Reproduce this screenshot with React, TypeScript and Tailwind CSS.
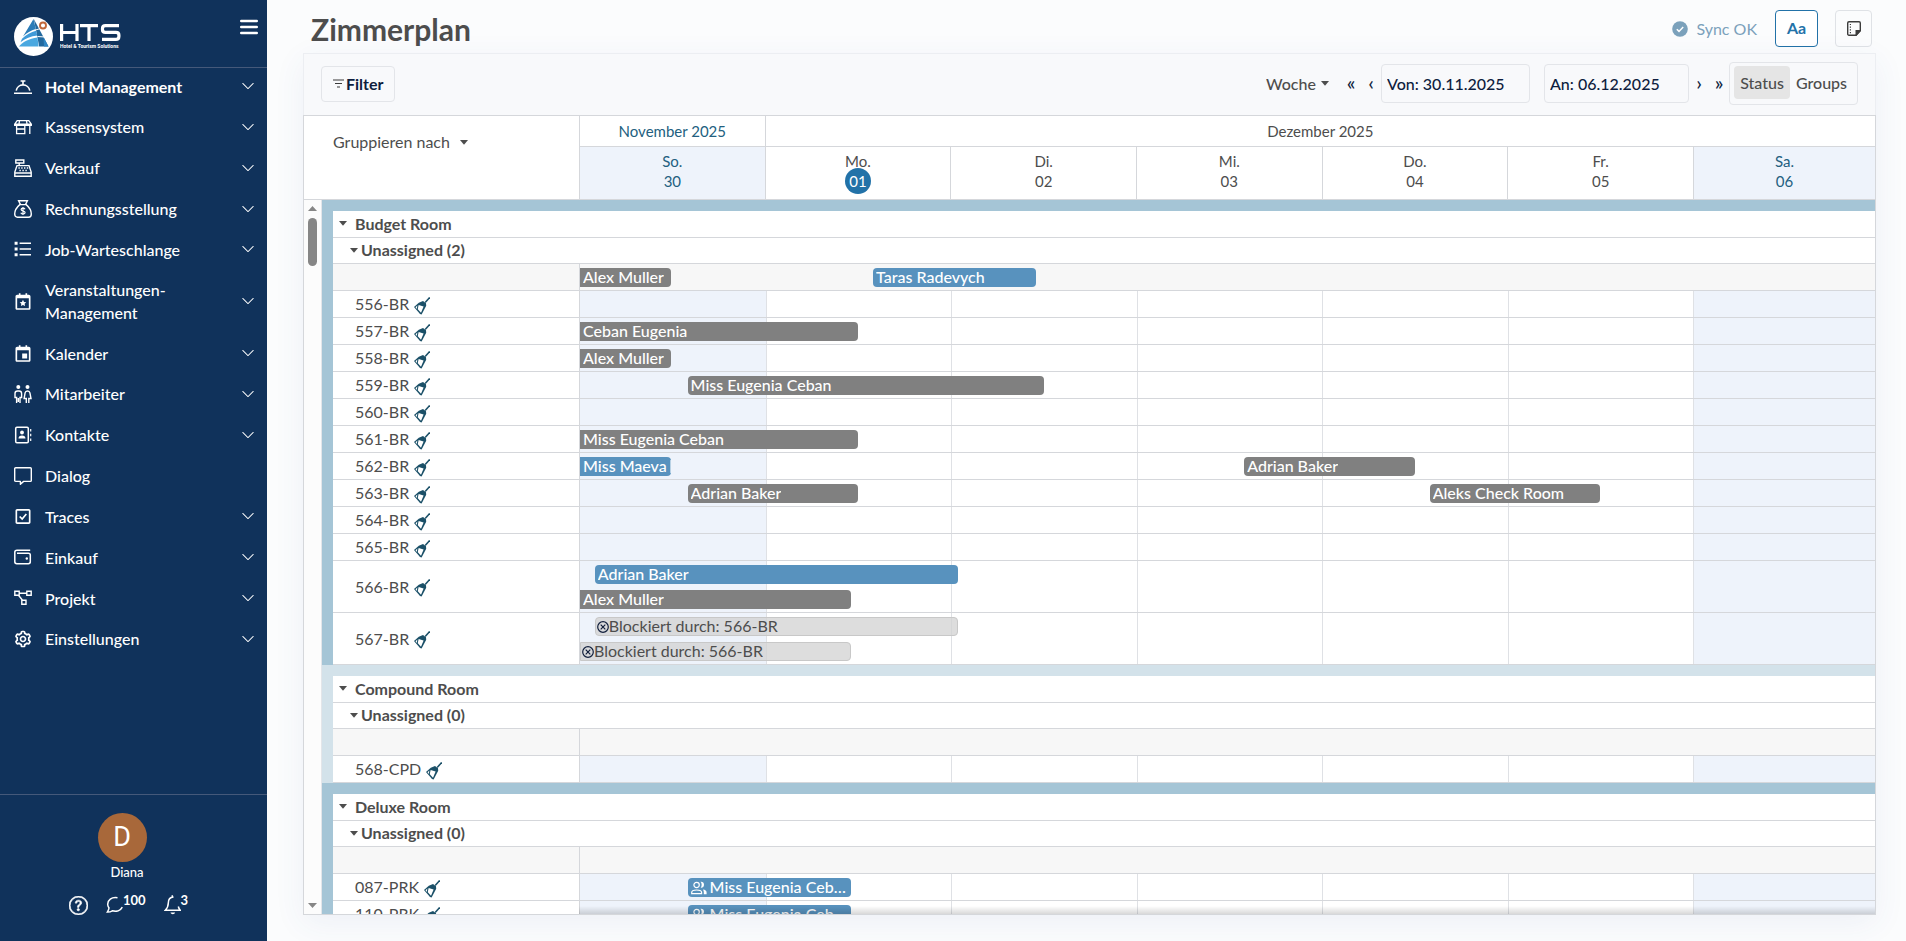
import type { ReactNode } from "react";
import { BiCalendarEvent, BiCalendarStar, BiCheckSquare, BiCog } from "react-icons/bi";
import { BsChevronDown, BsQuestionCircle } from "react-icons/bs";

interface NavItem {
  label: string;
  icon: ReactNode;
  active?: boolean;
  leaf?: boolean;
}

interface Booking {
  name: string;
  // offsets in days, counted from the first visible day
  from: number;
  to: number;
  kind: "gray" | "blue" | "blocked";
  group?: boolean;
  partial?: boolean;
}

interface Room {
  name: string;
  lanes: Booking[][];
}

interface RoomGroup {
  name: string;
  frame: string;
  unassigned: Booking[];
  rooms: Room[];
}

const NAV_ITEMS: NavItem[] = [
  { label: "Hotel Management", icon: <BellIcon />, active: true },
  { label: "Kassensystem", icon: <ShopIcon /> },
  { label: "Verkauf", icon: <RegisterIcon /> },
  { label: "Rechnungsstellung", icon: <MoneyBagIcon /> },
  { label: "Job-Warteschlange", icon: <ListIcon /> },
  { label: "Veranstaltungen-Management", icon: <BiCalendarStar size={21} /> },
  { label: "Kalender", icon: <BiCalendarEvent size={21} /> },
  { label: "Mitarbeiter", icon: <StaffIcon /> },
  { label: "Kontakte", icon: <ContactsIcon /> },
  { label: "Dialog", icon: <DialogIcon />, leaf: true },
  { label: "Traces", icon: <BiCheckSquare size={21} /> },
  { label: "Einkauf", icon: <WalletIcon /> },
  { label: "Projekt", icon: <ProjectIcon /> },
  { label: "Einstellungen", icon: <BiCog size={22} /> },
];

const DAYS = [
  { day: "So.", date: "30", weekend: true },
  { day: "Mo.", date: "01", today: true },
  { day: "Di.", date: "02" },
  { day: "Mi.", date: "03" },
  { day: "Do.", date: "04" },
  { day: "Fr.", date: "05" },
  { day: "Sa.", date: "06", weekend: true },
];

const GROUPS: RoomGroup[] = [
  {
    name: "Budget Room",
    frame: "bg-[#a5c5d6]",
    unassigned: [
      { name: "Alex Muller", from: 0, to: 0.49, kind: "gray" },
      { name: "Taras Radevych", from: 1.58, to: 2.46, kind: "blue" },
    ],
    rooms: [
      { name: "556-BR", lanes: [[]] },
      { name: "557-BR", lanes: [[{ name: "Ceban Eugenia", from: 0, to: 1.5, kind: "gray" }]] },
      { name: "558-BR", lanes: [[{ name: "Alex Muller", from: 0, to: 0.49, kind: "gray" }]] },
      { name: "559-BR", lanes: [[{ name: "Miss Eugenia Ceban", from: 0.58, to: 2.5, kind: "gray" }]] },
      { name: "560-BR", lanes: [[]] },
      { name: "561-BR", lanes: [[{ name: "Miss Eugenia Ceban", from: 0, to: 1.5, kind: "gray" }]] },
      {
        name: "562-BR",
        lanes: [
          [
            { name: "Miss Maeva", from: 0, to: 0.49, kind: "blue", partial: true },
            { name: "Adrian Baker", from: 3.58, to: 4.5, kind: "gray" },
          ],
        ],
      },
      {
        name: "563-BR",
        lanes: [
          [
            { name: "Adrian Baker", from: 0.58, to: 1.5, kind: "gray" },
            { name: "Aleks Check Room", from: 4.58, to: 5.5, kind: "gray" },
          ],
        ],
      },
      { name: "564-BR", lanes: [[]] },
      { name: "565-BR", lanes: [[]] },
      {
        name: "566-BR",
        lanes: [
          [{ name: "Adrian Baker", from: 0.08, to: 2.04, kind: "blue" }],
          [{ name: "Alex Muller", from: 0, to: 1.46, kind: "gray" }],
        ],
      },
      {
        name: "567-BR",
        lanes: [
          [{ name: "Blockiert durch: 566-BR", from: 0.08, to: 2.04, kind: "blocked" }],
          [{ name: "Blockiert durch: 566-BR", from: 0, to: 1.46, kind: "blocked" }],
        ],
      },
    ],
  },
  {
    name: "Compound Room",
    frame: "bg-[#d3e2ea]",
    unassigned: [],
    rooms: [{ name: "568-CPD", lanes: [[]] }],
  },
  {
    name: "Deluxe Room",
    frame: "bg-[#a5c5d6]",
    unassigned: [],
    rooms: [
      { name: "087-PRK", lanes: [[{ name: "Miss Eugenia Ceban", from: 0.58, to: 1.46, kind: "blue", group: true }]] },
      { name: "110-PRK", lanes: [[{ name: "Miss Eugenia Ceban", from: 0.58, to: 1.46, kind: "blue", group: true }]] },
    ],
  },
];

const BAR_STYLES: Record<Booking["kind"], string> = {
  gray: "bg-[#808080] pl-[3px] text-white font-medium",
  blue: "bg-[#5892be] pl-[3px] text-white font-medium",
  blocked: "border border-[#c8c8c8] bg-[#d2d2d2]/75 pl-px text-[#4d4d4d]",
};

// the last day column is cut slightly by the panel edge
const DAY_WIDTH = (51 / 356) * 100;

function BellIcon() {
  return (
    <svg width="18" height="18" viewBox="0 0 18 18" fill="none" stroke="currentColor" strokeWidth="1.6">
      <path d="M0 16.2h18M2.2 13.6a6.9 6.9 0 0 1 13.6 0M9 7.5V4.5M6.6 4h4.8" />
    </svg>
  );
}

function ShopIcon() {
  return (
    <svg width="18" height="18" viewBox="0 0 18 18" fill="none" stroke="currentColor" strokeWidth="1.3">
      <path d="M3.2 2.6h11.6l2.5 3.6H.7zM.7 6.2v1.2h16.6V6.2M2.6 7.4v8.2h8.2V7.4M2.6 11h8.2M15.8 7.4V16M5.5 2.8 4.8 7M12.5 2.8l.7 4.2" />
    </svg>
  );
}

function RegisterIcon() {
  return (
    <svg width="18" height="18" viewBox="0 0 18 18" fill="none" stroke="currentColor" strokeWidth="1.4">
      <path d="M1.8 1h8v3h-8zM5.2 4v2.5M3 6.6h12l2.2 6.4v4.2H.8V13zM.8 14h16.4" />
      <path d="M4.4 9h1.4M7.2 9h1.4M10 9h1.4M12.8 9h1.4M5.4 11.5h1.4M8.4 11.5h1.4M11.4 11.5h1.4" />
    </svg>
  );
}

function MoneyBagIcon() {
  return (
    <svg width="18" height="18" viewBox="0 0 18 18" fill="none" stroke="currentColor" strokeWidth="1.4">
      <path d="M6.4 4.4 4.6.8h8.8l-1.8 3.6M5.8 4.6h6.4C15 7 17.3 10.4 17.3 14c0 2-1 3.2-2.8 3.2h-11C1.7 17.2.7 16 .7 14 .7 10.4 3 7 5.8 4.6z" />
      <path d="M11 9.2c-.4-.8-1.2-1-2-1-1.1 0-1.9.6-1.9 1.4 0 2 4 .8 4 2.9 0 .9-.9 1.5-2.1 1.5-1 0-1.8-.4-2.2-1.2M9 7v8" strokeWidth="1.2" />
    </svg>
  );
}

function ListIcon() {
  return (
    <svg width="18" height="18" viewBox="0 0 18 18" fill="currentColor">
      <path d="M.6 1.800h3v3h-3zM.6 7.500h3v3h-3zM.6 13.200h3v3h-3zM5.600 2.600h11.400v1.400H5.600zM5.600 8.300h11.400v1.400H5.600zM5.600 14h11.400v1.400H5.600z" />
    </svg>
  );
}

function StaffIcon() {
  return (
    <svg width="18" height="18" viewBox="0 0 18 18" fill="none" stroke="currentColor" strokeWidth="1.4">
      <circle cx="4.3" cy="2" r="2" fill="currentColor" stroke="none" />
      <circle cx="13.5" cy="2" r="2" fill="currentColor" stroke="none" />
      <path d="M2.6 18v-5.5H1V8.6C1 7 2 6 3.5 6h1.6C6.6 6 7.6 7 7.6 8.6v3.9H6V18M4.3 13v4" />
      <path d="M12.3 18v-4.5h-2.2l1-5.5c.2-1.3 1-2 2.4-2s2.2.7 2.4 2l1.1 5.5h-2.2V18" />
    </svg>
  );
}

function ContactsIcon() {
  return (
    <svg width="18" height="18" viewBox="0 0 18 18" fill="none" stroke="currentColor" strokeWidth="1.5">
      <rect x="1.7" y="1.2" width="12.6" height="15.6" rx="1.2" />
      <path d="M16.7 3v2.5M16.7 7.8v2.5M16.7 12.5V15" strokeWidth="1.2" />
      <circle cx="8" cy="6.5" r="1.9" fill="currentColor" stroke="none" />
      <path d="M4.5 12.6c0-2 1.3-3.2 3.5-3.2s3.5 1.2 3.5 3.2z" fill="currentColor" stroke="none" />
    </svg>
  );
}

function DialogIcon() {
  return (
    <svg width="18" height="18" viewBox="0 0 18 18" fill="none" stroke="currentColor" strokeWidth="1.4" strokeLinejoin="round">
      <path d="M1.7.8h14.6c.6 0 1 .4 1 1v11.6c0 .6-.4 1-1 1H9.6l-3.2 2.8v-2.8H1.7c-.6 0-1-.4-1-1V1.8c0-.6.4-1 1-1z" />
    </svg>
  );
}

function WalletIcon() {
  return (
    <svg width="18" height="18" viewBox="0 0 18 18" fill="none" stroke="currentColor" strokeWidth="1.5">
      <path d="M16.2 2.3H3C1.7 2.3.8 3 .8 4.2v9.600c0 1.200.8 1.900 2 1.900h11.600c1.200 0 1.900-.7 1.900-1.900V7c0-1.200-.7-1.800-1.900-1.800H3" />
      <circle cx="12.8" cy="10.5" r="1.2" fill="currentColor" stroke="none" />
    </svg>
  );
}

function ProjectIcon() {
  return (
    <svg width="18" height="18" viewBox="0 0 18 18" fill="none" stroke="currentColor" strokeWidth="1.4">
      <path d="M.8 2.300h4.400v4H.8zM12.800 2.300h4.400v4h-4.400zM7.800 11.300h4.200v4H7.800zM5.200 4.300h7.600M4.500 6.300l4 5" />
    </svg>
  );
}

function Caret({ className = "" }: { className?: string }) {
  return (
    <svg width="8" height="5" viewBox="0 0 8 5" fill="currentColor" className={`shrink-0 ${className}`}>
      <path d="M0 0h8L4 4.800z" />
    </svg>
  );
}

function BroomIcon() {
  return (
    <svg width="16" height="18" viewBox="0 0 16 18" className="mt-[3px] shrink-0 text-[#1b5068]">
      <path d="M15.700.4 11.200 5.400" stroke="currentColor" strokeWidth="1.500" fill="none" />
      <path d="M0 10 4.800 5.800 9 4l3 2.200.2 2.600L7.600 17.600 6 17z" fill="currentColor" />
      <path d="M4.600 7.900 9.600 9.600 7 15.800 3.800 12.200z" fill="#fff" />
      <path d="M1.500 10.200 3.300 8.600 2.900 12z" fill="#fff" />
    </svg>
  );
}

function BlockedIcon() {
  return (
    <svg width="12" height="12" viewBox="0 0 12 12" fill="none" stroke="#12203d" strokeWidth="1.200" className="shrink-0">
      <circle cx="6" cy="6" r="5.300" />
      <path d="m3.700 3.700 4.600 4.600M8.300 3.700 3.700 8.300" />
    </svg>
  );
}

function GuestsIcon() {
  return (
    <svg width="16" height="14" viewBox="0 0 16 14" fill="none" stroke="currentColor" strokeWidth="1.200" className="shrink-0">
      <circle cx="5.600" cy="4" r="2.700" />
      <path d="M.7 12.700v-1.200C.7 9.800 2.600 9 5.600 9s5 .8 5 2.500v1.200z" />
      <path d="M9.500.8c2.200-.3 3.500 1 3.500 3 0 1.800-1.300 3.200-3.300 3 1.400-1.700 1.300-4.400-.2-6zM12 8.600c2.200.3 3.600 1.200 3.600 2.900v1.800h-2.800c.2-2-.1-3.500-.8-4.700z" fill="currentColor" stroke="none" />
    </svg>
  );
}

function Logo() {
  return (
    <a href="#" aria-label="HTS" className="flex items-center gap-[7px]">
      <svg width="39" height="39" viewBox="0 0 39 39">
        <circle cx="19.500" cy="19.500" r="19.500" fill="#fff" />
        <path d="M19.800 2 34.500 29.500H25.200z" fill="#22699f" />
        <path d="M29.500 20l5 9.500H30z" fill="#2f86c4" />
        <path d="M19.500 2 21.800 12C17 13.300 12.500 16 9 19.500z" fill="#2b7cb8" />
        <path d="M22 13.700 23.300 18.600C17 19.300 11 21.500 6.500 25.300L8 21.800C12 17.500 17 15 22 13.700z" fill="#3f9ad8" />
        <path d="M23.500 20.400 24.600 29.500H5C8 25 15 21.400 23.500 20.400z" fill="#4aa8e0" />
        <path d="M22 12.900 26.500 11.500M23.500 19.500 31 20" stroke="#fff" strokeWidth="1" />
        <circle cx="29" cy="8.500" r="3" fill="#fff" stroke="#c0673a" strokeWidth="1.900" />
      </svg>
      <svg width="66" height="26" viewBox="0 0 66 26" fill="none" stroke="#fff" strokeWidth="3.200">
        <path d="M1.600 0v17M17 0v17M1.600 8.500H17M20 1.600h18M29 1.600V17M59 1.600H45.500c-2 0-3 .9-3 2.700v1.400c0 1.800 1 2.700 3 2.700h10.400c2 0 3 .9 3 2.700v1.400c0 1.900-1 2.900-3 2.900H42" />
        <text x="0" y="24" fontSize="5" fontWeight="700" fontFamily="Roboto, sans-serif" fill="#fff" stroke="none">
          Hotel &amp; Tourism Solutions
        </text>
      </svg>
    </a>
  );
}

function Sidebar() {
  return (
    <aside className="flex w-[267px] shrink-0 flex-col bg-[#10325b] text-white">
      <div className="flex h-[68px] items-start justify-between border-b border-[#45597a] pt-[17px] pr-2 pl-[14px]">
        <Logo />
        <button type="button" aria-label="Menü" className="px-px pt-[2px]">
          <svg width="18" height="16" viewBox="0 0 18 16" fill="none" stroke="#fff" strokeWidth="2.400" strokeLinecap="round">
            <path d="M1.200 2h15.600M1.200 8h15.600M1.200 14h15.600" />
          </svg>
        </button>
      </div>

      <nav className="flex flex-1 flex-col justify-between pb-[135px]">
        {NAV_ITEMS.map((item) => (
          <a
            key={item.label}
            href="#"
            className="flex min-h-[38px] items-center justify-between pt-[6px] pb-2 pr-3 pl-[13px] text-base leading-[23px]"
          >
            <span className="flex items-center">
              <span className="flex w-5 shrink-0 justify-center">{item.icon}</span>
              <span className={`ml-3 w-[160px] ${item.active ? "font-bold" : "font-medium"}`}>
                {item.label}
              </span>
            </span>
            {!item.leaf && <BsChevronDown size={14} />}
          </a>
        ))}
      </nav>

      <div className="flex h-[147px] flex-col items-center border-t border-[#45597a] pt-[18px]">
        <div className="mr-[23px] flex size-[49px] items-center justify-center rounded-full bg-[#a8683a] font-[Roboto] text-[27px]">
          D
        </div>
        <p className="mr-[13px] text-[13px] leading-5 font-medium">Diana</p>
        <div className="mt-[11px] mr-[10px] flex items-start gap-[18px]">
          <button type="button" aria-label="Hilfe" className="pt-[3px]">
            <BsQuestionCircle size={19} strokeWidth={0.5} />
          </button>
          <button type="button" aria-label="Nachrichten" className="flex items-start">
            <svg width="17" height="23" viewBox="0 0 17 23" fill="none" stroke="currentColor" strokeWidth="1.500">
              <path d="M11.500 4.800C5.500 3.800 1.500 7.300 1.700 11.500c0 1.500.7 2.600 1.300 3.500-.2 1.500-.8 2.800-1.700 4.100 1.800.1 3.500-.3 5-1.300 4 1 8.300-.1 10-3.600" />
            </svg>
            <span className="text-[13px] leading-[14px] font-bold">100</span>
          </button>
          <button type="button" aria-label="Benachrichtigungen" className="flex items-start">
            <svg width="17" height="23" viewBox="0 0 17 23" fill="none" stroke="currentColor" strokeWidth="1.500">
              <path d="M9.500 4C6 4.200 4.300 7 4.300 10c0 3-.8 5-3 7.300h15c-1-1-1.700-2.300-2-3.800M8.300 2.300v2" />
              <path d="M6.500 19.500h4.600c-.3 1.200-1.200 1.700-2.300 1.700s-2-.5-2.300-1.700z" fill="currentColor" stroke="none" />
            </svg>
            <span className="text-[13px] leading-[14px] font-bold">3</span>
          </button>
        </div>
      </div>
    </aside>
  );
}

function PageHeader() {
  return (
    <header className="flex h-[53px] shrink-0 items-start justify-between pr-1 pl-2">
      <h1 className="text-[30px] leading-[58px] font-bold text-[#4d4d4d]">Zimmerplan</h1>
      <div className="flex items-center pt-[10px]">
        <svg width="16" height="16" viewBox="0 0 16 16" className="mr-2">
          <circle cx="8" cy="8" r="7.800" fill="#7ba1bb" />
          <path d="m4.800 8.200 2.200 2.200 4.200-4.400" fill="none" stroke="#fff" strokeWidth="1.500" />
        </svg>
        <span className="text-base text-[#7ba1bb]">Sync OK</span>
        <button
          type="button"
          className="ml-[18px] h-[37px] w-[43px] rounded border border-[#2272a8] bg-white pb-[2px] text-base font-bold text-[#2272a8]"
        >
          Aa
        </button>
        <button
          type="button"
          aria-label="Notizen"
          className="ml-[17px] flex h-[37px] w-[37px] items-center justify-center rounded border border-[#dfe2e6]"
        >
          <svg width="14" height="15" viewBox="0 0 14 15" fill="none" stroke="#3c3c3c" strokeWidth="1.400">
            <path d="M2 .8h10c.8 0 1.300.5 1.300 1.300v7.500L9 14.200H2c-.8 0-1.300-.5-1.300-1.300V2.100C.7 1.300 1.200.8 2 .8z" />
            <path d="M13 9.800H9.200V14z" fill="#3c3c3c" />
            <path d="M2.800 3.500h1.200M2.800 6.200h1.200M2.800 8.900h1.200M2.800 11.600h1.200" strokeWidth="1.200" />
          </svg>
        </button>
      </div>
    </header>
  );
}

function Toolbar() {
  return (
    <div className="flex h-[62px] items-center justify-between border-x border-t border-[#eceef2] bg-[#f8f9fb] pr-[17px] pb-[2px] pl-[17px]">
      <button
        type="button"
        className="flex h-9 items-center gap-[2px] rounded border border-[#e3e5e9] px-[11px] text-base font-bold text-[#0e1d3e]"
      >
        <svg width="11" height="9" viewBox="0 0 11 9" fill="none" stroke="#3a3a3a" strokeWidth="1.100">
          <path d="M0 1h11M2 4.500h7M4 8h3" />
        </svg>
        Filter
      </button>

      <div className="flex items-center text-base font-medium text-[#0e1d3e]">
        <label className="relative flex items-center text-[#4d4d4d]">
          <span className="sr-only">Zeitraum</span>
          <select defaultValue="Woche" className="h-8 w-[63px] appearance-none bg-transparent">
            <option>Woche</option>
          </select>
          <Caret className="pointer-events-none absolute right-0" />
        </label>
        <button type="button" aria-label="Vorherige Woche" className="ml-4 w-3 pb-[3px] text-xl">
          «
        </button>
        <button type="button" aria-label="Vorheriger Tag" className="ml-2 w-3 pb-[3px] text-xl">
          ‹
        </button>
        <input
          aria-label="Von"
          defaultValue="Von: 30.11.2025"
          className="ml-1 h-[39px] w-[149px] rounded border border-[#e3e5e9] px-[5px]"
        />
        <input
          aria-label="An"
          defaultValue="An: 06.12.2025"
          className="ml-[14px] h-[39px] w-[145px] rounded border border-[#e3e5e9] px-[5px]"
        />
        <button type="button" aria-label="Nächster Tag" className="ml-1 w-3 pb-[3px] text-xl">
          ›
        </button>
        <button type="button" aria-label="Nächste Woche" className="ml-2 w-3 pb-[3px] text-xl">
          »
        </button>
        <div className="ml-1 flex h-[43px] rounded border border-[#e3e5e9] px-1 pt-[3px] pb-[5px] text-[#4d4d4d]">
          <button type="button" className="w-14 rounded-sm bg-[#e5e5e5]">
            Status
          </button>
          <button type="button" className="w-[63px]">
            Groups
          </button>
        </div>
      </div>
    </div>
  );
}

function PlanHeader() {
  return (
    <div className="flex h-[84px] shrink-0 border-b border-[#d5d7db] bg-white text-[15px] text-[#4d4d4d]">
      <div className="w-[275px] shrink-0 pt-[14px] pl-[29px]">
        <button type="button" className="flex items-center gap-[10px] text-base leading-6">
          Gruppieren nach
          <Caret />
        </button>
      </div>
      <div className="grid flex-1 grid-cols-[repeat(6,51fr)_50fr] grid-rows-[31px_52px] text-center">
        <div className="border-b border-l border-[#d5d7db] leading-[30px] text-[#235f80]">
          November 2025
        </div>
        <div className="col-span-6 border-b border-l border-[#d5d7db] leading-[30px]">Dezember 2025</div>
        {DAYS.map((d) => (
          <div
            key={d.date}
            className={`border-l border-[#d5d7db] pt-1 leading-5 ${d.weekend ? "bg-[#eef3fb] text-[#235f80]" : ""}`}
          >
            {d.day}
            <div className="flex justify-center">
              {d.today ? (
                <span className="-mt-[3px] flex size-[26px] items-center justify-center rounded-full bg-[#2272a8] text-white">
                  {d.date}
                </span>
              ) : (
                d.date
              )}
            </div>
          </div>
        ))}
      </div>
    </div>
  );
}

function Bar({ booking }: { booking: Booking }) {
  return (
    <div
      className={`absolute inset-y-0 flex items-center overflow-hidden leading-[18px] ${
        booking.from === 0 ? "rounded-r" : "rounded"
      } ${BAR_STYLES[booking.kind]}`}
      style={{
        left: `${booking.from * DAY_WIDTH}%`,
        width: `${(booking.to - booking.from) * DAY_WIDTH}%`,
      }}
    >
      {booking.kind === "blocked" && <BlockedIcon />}
      {booking.group && <GuestsIcon />}
      <span className={booking.group ? "mr-1 ml-[3px] truncate pb-px" : "truncate pb-px"}>{booking.name}</span>
      {booking.partial && <span className="absolute inset-y-[3px] right-0 w-px bg-[#b9d2e5]" />}
    </div>
  );
}

function Lanes({ lanes }: { lanes: Booking[][] }) {
  return (
    <div className="relative flex flex-col gap-[6px] pt-1 pb-[3px]">
      {lanes.map((lane, i) => (
        <div key={i} className="relative h-[19px]">
          {lane.map((b) => (
            <Bar key={b.name} booking={b} />
          ))}
        </div>
      ))}
    </div>
  );
}

function DayCells() {
  return (
    <div className="absolute inset-0 grid grid-cols-[repeat(6,51fr)_50fr]">
      {DAYS.map((d, i) => (
        <div
          key={d.date}
          className={`${i > 0 ? "border-l border-[#dfe1e5]" : ""} ${d.weekend ? "bg-[#eef3fb]" : ""}`}
        />
      ))}
    </div>
  );
}

function Group({ group }: { group: RoomGroup }) {
  return (
    <section className={`pt-[11px] pl-[11px] ${group.frame}`}>
      <div className="bg-white">
        <button
          type="button"
          className="flex h-[27px] w-full items-center gap-2 border-b border-[#d5d7db] pb-px pl-[6px] font-bold"
        >
          <Caret />
          {group.name}
        </button>
        <button
          type="button"
          className="flex h-[26px] w-full items-center gap-[3px] border-b border-[#d5d7db] pb-px pl-[17px] font-bold"
        >
          <Caret />
          Unassigned ({group.unassigned.length})
        </button>
        <div className="flex border-b border-[#d5d7db] bg-[#f7f7f7]">
          <div className="w-[247px] shrink-0 border-r border-[#d5d7db]" />
          <div className="flex-1">
            <Lanes lanes={[group.unassigned]} />
          </div>
        </div>
        {group.rooms.map((room) => (
          <div key={room.name} className="flex border-b border-[#d5d7db]">
            <div className="flex w-[247px] shrink-0 items-center gap-[5px] border-r border-[#d5d7db] pl-[22px] leading-[22px]">
              {room.name}
              <BroomIcon />
            </div>
            <div className="relative flex-1">
              <DayCells />
              <Lanes lanes={room.lanes} />
            </div>
          </div>
        ))}
      </div>
    </section>
  );
}

function Scrollbar() {
  return (
    <div className="flex w-[18px] shrink-0 flex-col items-center border-r border-[#e3e5e9] bg-[#fcfcfc] py-[6px] text-[#868686]">
      <svg width="9" height="5" viewBox="0 0 9 5" fill="currentColor">
        <path d="M0 5h9L4.500 0z" />
      </svg>
      <div className="mt-[7px] h-12 w-[9px] rounded-full bg-[#868686]" />
      <svg width="9" height="5" viewBox="0 0 9 5" fill="currentColor" className="mt-auto">
        <path d="M0 0h9L4.500 5z" />
      </svg>
    </div>
  );
}

export default function App() {
  return (
    <div className="flex h-screen bg-[#fbfcfd] font-[Lato,sans-serif]">
      <Sidebar />
      <main className="flex min-w-0 flex-1 flex-col pr-[30px] pb-[26px] pl-9">
        <PageHeader />
        <div className="flex min-h-0 flex-1 flex-col shadow-[0_8px_30px_rgba(60,80,160,0.07)]">
          <Toolbar />
          <div className="flex min-h-0 flex-1 flex-col border border-[#d5d7db] bg-white">
            <PlanHeader />
            <div className="relative flex min-h-0 flex-1 overflow-hidden text-base text-[#4d4d4d]">
              <Scrollbar />
              <div className="min-w-0 flex-1 overflow-hidden">
                {GROUPS.map((g) => (
                  <Group key={g.name} group={g} />
                ))}
              </div>
              <div className="absolute right-0 bottom-0 left-[275px] h-2 bg-linear-to-t from-black/15 to-transparent" />
            </div>
          </div>
        </div>
      </main>
    </div>
  );
}
